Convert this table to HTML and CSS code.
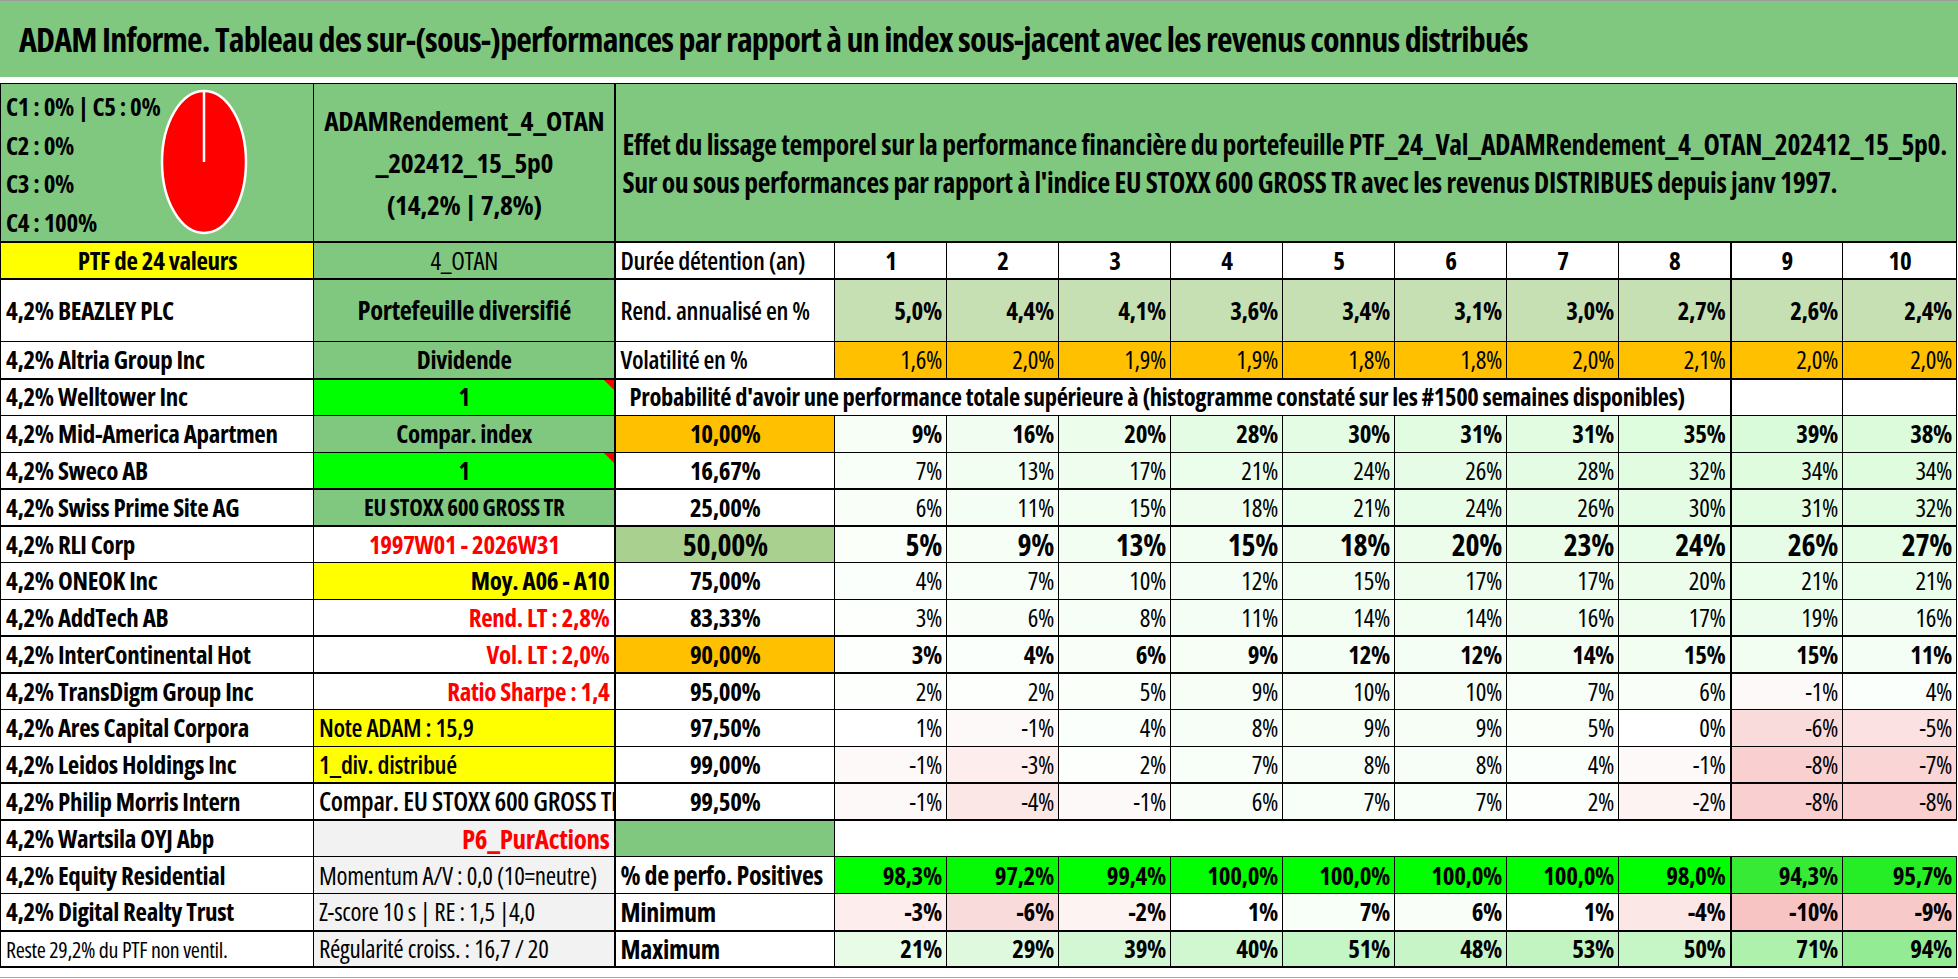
FILE: index.html
```html
<!DOCTYPE html>
<html lang="fr">
<head>
<meta charset="utf-8">
<title>ADAM Informe</title>
<link rel="stylesheet" href="styles.css">
</head>
<body>
<header class="title">ADAM Informe. Tableau des sur-(sous-)performances par rapport à un index sous-jacent avec les revenus connus distribués</header>
<div class="strip"></div>
<table class="sheet">
<colgroup>
<col class="ca"><col class="cb"><col class="cc">
<col class="cn"><col class="cn"><col class="cn"><col class="cn"><col class="cn"><col class="cn"><col class="cn"><col class="cn"><col class="cn"><col class="cl">
</colgroup>
<tbody>
<tr class="r0 tk">
<td class="g top"><div class="cbox"><div class="clines"><div>C1 : 0% | C5 : 0%</div><div>C2 : 0%</div><div>C3 : 0%</div><div>C4 : 100%</div></div>
<svg class="pie" width="88" height="146" viewBox="0 0 88 146"><ellipse cx="44" cy="73" rx="42" ry="71" fill="#ff0000" stroke="#ffffff" stroke-width="2.5"/><line x1="44" y1="2" x2="44" y2="73" stroke="#ffffff" stroke-width="2.5"/></svg></div></td>
<td class="g c hd"><div>ADAMRendement_4_OTAN</div><div>_202412_15_5p0</div><div>(14,2% | 7,8%)</div></td>
<td class="g eff vl" colspan="11"><div>Effet du lissage temporel sur la performance financière du portefeuille PTF_24_Val_ADAMRendement_4_OTAN_202412_15_5p0.</div><div>Sur ou sous performances par rapport à l'indice EU STOXX 600 GROSS TR avec les revenus DISTRIBUES depuis janv 1997.</div></td>
</tr>
<tr class="rs tk">
<td class="y c">PTF de 24 valeurs</td>
<td class="g c otan">4_OTAN</td>
<td class="vl m">Durée détention (an)</td>
<td class="c">1</td><td class="c">2</td><td class="c">3</td><td class="c">4</td><td class="c">5</td><td class="c">6</td><td class="c">7</td><td class="c">8</td><td class="c vl">9</td><td class="c">10</td>
</tr>
<tr class="r2">
<td>4,2% BEAZLEY PLC</td>
<td class="g c pdiv">Portefeuille diversifié</td>
<td class="vl m">Rend. annualisé en %</td>
<td class="rb r">5,0%</td><td class="rb r">4,4%</td><td class="rb r">4,1%</td><td class="rb r">3,6%</td><td class="rb r">3,4%</td><td class="rb r">3,1%</td><td class="rb r">3,0%</td><td class="rb r">2,7%</td><td class="rb r vl">2,6%</td><td class="rb r">2,4%</td>
</tr>
<tr class="rs tk">
<td>4,2% Altria Group Inc</td>
<td class="g c">Dividende</td>
<td class="vl m">Volatilité en %</td>
<td class="o r n">1,6%</td><td class="o r n">2,0%</td><td class="o r n">1,9%</td><td class="o r n">1,9%</td><td class="o r n">1,8%</td><td class="o r n">1,8%</td><td class="o r n">2,0%</td><td class="o r n">2,1%</td><td class="o r n vl">2,0%</td><td class="o r n">2,0%</td>
</tr>
<tr class="rs">
<td>4,2% Welltower Inc</td>
<td class="lg c cm">1</td>
<td class="vl prob" colspan="9">Probabilité d'avoir une performance totale supérieure à (histogramme constaté sur les #1500 semaines disponibles)</td>
<td class="vl"></td><td></td>
</tr>
<tr class="rs">
<td>4,2% Mid-America Apartmen</td>
<td class="g c">Compar. index</td>
<td class="o c vl">10,00%</td>
<td class="p r">9%</td><td class="p r">16%</td><td class="p r">20%</td><td class="p r">28%</td><td class="p r">30%</td><td class="p r">31%</td><td class="p r">31%</td><td class="p r">35%</td><td class="p r vl">39%</td><td class="p r">38%</td>
</tr>
<tr class="rs tk">
<td>4,2% Sweco AB</td>
<td class="lg c cm">1</td>
<td class="c vl">16,67%</td>
<td class="p r n">7%</td><td class="p r n">13%</td><td class="p r n">17%</td><td class="p r n">21%</td><td class="p r n">24%</td><td class="p r n">26%</td><td class="p r n">28%</td><td class="p r n">32%</td><td class="p r n vl">34%</td><td class="p r n">34%</td>
</tr>
<tr class="rs tk">
<td>4,2% Swiss Prime Site AG</td>
<td class="g c sm">EU STOXX 600 GROSS TR</td>
<td class="c vl">25,00%</td>
<td class="p r n">6%</td><td class="p r n">11%</td><td class="p r n">15%</td><td class="p r n">18%</td><td class="p r n">21%</td><td class="p r n">24%</td><td class="p r n">26%</td><td class="p r n">30%</td><td class="p r n vl">31%</td><td class="p r n">32%</td>
</tr>
<tr class="rs">
<td>4,2% RLI Corp</td>
<td class="c red">1997W01 - 2026W31</td>
<td class="pg c big vl">50,00%</td>
<td class="p r big">5%</td><td class="p r big">9%</td><td class="p r big">13%</td><td class="p r big">15%</td><td class="p r big">18%</td><td class="p r big">20%</td><td class="p r big">23%</td><td class="p r big">24%</td><td class="p r big vl">26%</td><td class="p r big">27%</td>
</tr>
<tr class="rs">
<td>4,2% ONEOK Inc</td>
<td class="y r">Moy. A06 - A10</td>
<td class="c vl">75,00%</td>
<td class="p r n">4%</td><td class="p r n">7%</td><td class="p r n">10%</td><td class="p r n">12%</td><td class="p r n">15%</td><td class="p r n">17%</td><td class="p r n">17%</td><td class="p r n">20%</td><td class="p r n vl">21%</td><td class="p r n">21%</td>
</tr>
<tr class="rs tk">
<td>4,2% AddTech AB</td>
<td class="r red">Rend. LT : 2,8%</td>
<td class="c vl">83,33%</td>
<td class="p r n">3%</td><td class="p r n">6%</td><td class="p r n">8%</td><td class="p r n">11%</td><td class="p r n">14%</td><td class="p r n">14%</td><td class="p r n">16%</td><td class="p r n">17%</td><td class="p r n vl">19%</td><td class="p r n">16%</td>
</tr>
<tr class="rs tk">
<td>4,2% InterContinental Hot</td>
<td class="r red">Vol. LT : 2,0%</td>
<td class="o c vl">90,00%</td>
<td class="p r">3%</td><td class="p r">4%</td><td class="p r">6%</td><td class="p r">9%</td><td class="p r">12%</td><td class="p r">12%</td><td class="p r">14%</td><td class="p r">15%</td><td class="p r vl">15%</td><td class="p r">11%</td>
</tr>
<tr class="rs">
<td>4,2% TransDigm Group Inc</td>
<td class="r red">Ratio Sharpe : 1,4</td>
<td class="c vl">95,00%</td>
<td class="p r n">2%</td><td class="p r n">2%</td><td class="p r n">5%</td><td class="p r n">9%</td><td class="p r n">10%</td><td class="p r n">10%</td><td class="p r n">7%</td><td class="p r n">6%</td><td class="p r n vl">-1%</td><td class="p r n">4%</td>
</tr>
<tr class="rs">
<td>4,2% Ares Capital Corpora</td>
<td class="y m">Note ADAM : 15,9</td>
<td class="c vl">97,50%</td>
<td class="p r n">1%</td><td class="p r n">-1%</td><td class="p r n">4%</td><td class="p r n">8%</td><td class="p r n">9%</td><td class="p r n">9%</td><td class="p r n">5%</td><td class="p r n">0%</td><td class="p r n vl">-6%</td><td class="p r n">-5%</td>
</tr>
<tr class="rs tk">
<td>4,2% Leidos Holdings Inc</td>
<td class="y m">1_div. distribué</td>
<td class="c vl">99,00%</td>
<td class="p r n">-1%</td><td class="p r n">-3%</td><td class="p r n">2%</td><td class="p r n">7%</td><td class="p r n">8%</td><td class="p r n">8%</td><td class="p r n">4%</td><td class="p r n">-1%</td><td class="p r n vl">-8%</td><td class="p r n">-7%</td>
</tr>
<tr class="rs tk">
<td>4,2% Philip Morris Intern</td>
<td class="m clip">Compar. EU STOXX 600 GROSS TR</td>
<td class="c vl">99,50%</td>
<td class="p r n">-1%</td><td class="p r n">-4%</td><td class="p r n">-1%</td><td class="p r n">6%</td><td class="p r n">7%</td><td class="p r n">7%</td><td class="p r n">2%</td><td class="p r n">-2%</td><td class="p r n vl">-8%</td><td class="p r n">-8%</td>
</tr>
<tr class="rs">
<td>4,2% Wartsila OYJ Abp</td>
<td class="gray r red pur">P6_PurActions</td>
<td class="g vl"></td>
<td class="blank" colspan="10"></td>
</tr>
<tr class="rs">
<td>4,2% Equity Residential</td>
<td class="gray n2">Momentum A/V : 0,0 (10=neutre)</td>
<td class="vl lab">% de perfo. Positives</td>
<td class="lg r">98,3%</td><td class="lg2 r">97,2%</td><td class="lg r">99,4%</td><td class="lg r">100,0%</td><td class="lg r">100,0%</td><td class="lg r">100,0%</td><td class="lg r">100,0%</td><td class="lg r">98,0%</td><td class="lg4 r vl">94,3%</td><td class="lg3 r">95,7%</td>
</tr>
<tr class="rs tk">
<td>4,2% Digital Realty Trust</td>
<td class="gray n2">Z-score 10 s | RE : 1,5 |4,0</td>
<td class="vl lab">Minimum</td>
<td class="p r">-3%</td><td class="p r">-6%</td><td class="p r">-2%</td><td class="p r">1%</td><td class="p r">7%</td><td class="p r">6%</td><td class="p r">1%</td><td class="p r">-4%</td><td class="p r vl">-10%</td><td class="p r">-9%</td>
</tr>
<tr class="rs tk">
<td class="reste">Reste 29,2% du PTF non ventil.</td>
<td class="gray n2">Régularité croiss. : 16,7 / 20</td>
<td class="vl lab">Maximum</td>
<td class="mx r">21%</td><td class="mx r">29%</td><td class="mx r">39%</td><td class="mx r">40%</td><td class="mx r">51%</td><td class="mx r">48%</td><td class="mx r">53%</td><td class="mx r">50%</td><td class="mx r vl">71%</td><td class="mx r">94%</td>
</tr>
</tbody>
</table>
<div class="foot"></div>
<script src="script.js"></script>
</body>
</html>
```
FILE: styles.css
```css
html, body {
  margin: 0;
  padding: 0;
  background: #ffffff;
}
body {
  width: 1958px;
  height: 979px;
  overflow: hidden;
  font-family: "Open Sans", "Liberation Sans", sans-serif;
  font-stretch: 75%;
  letter-spacing: -0.02em;
  color: #000000;
}
.title {
  box-sizing: border-box;
  height: 77px;
  border-top: 1px solid #9c9c9c;
  background: #80c880;
  display: flex;
  align-items: center;
  padding-left: 19px;
  font-size: 34px;
  font-weight: 700;
  letter-spacing: -0.024em;
  white-space: nowrap;
}
.strip {
  height: 6px;
}
.sheet {
  border-collapse: collapse;
  table-layout: fixed;
  width: 1956px;
}
.ca { width: 313px; }
.cb { width: 301px; }
.cc { width: 220px; }
.cn { width: 112px; }
.cl { width: 114px; }

.sheet td {
  border: 1px solid #000000;
  padding: 0 4px 0 5px;
  font-size: 25px;
  font-weight: 700;
  white-space: nowrap;
  line-height: 1.1;
  vertical-align: middle;
}
.r0 { height: 156px; }
.r2 { height: 63px; }
.rs { height: 36.8px; }
.tk > td { border-bottom: 2px solid #000000; }
.sheet td.vl { border-left: 2px solid #000000; }

.sheet td.top { vertical-align: top; }
.cbox {
  display: flex;
  align-items: flex-start;
}
.clines {
  flex: 0 0 147px;
  padding-top: 3px;
  line-height: 38.5px;
  font-size: 25px;
}
.pie {
  display: block;
  flex: 0 0 auto;
  margin-top: 5px;
}
.sheet td.hd {
  font-size: 27.5px;
  line-height: 42px;
}
.sheet td.eff {
  font-size: 27.6px;
  line-height: 38px;
  padding-left: 7px;
}
.sheet td.prob {
  font-size: 24.5px;
  padding-left: 14px;
  background: #ffffff;
}

.c { text-align: center; }
.r { text-align: right; }
.sheet td.n { font-weight: 400; }
.sheet td.m { font-weight: 600; }
.sheet td.lab { font-weight: 700; font-size: 26px; }
.sheet td.n2 { font-weight: 500; font-size: 25px; letter-spacing: -0.012em; }
.sheet td.otan { font-weight: 500; font-size: 25px; }
.sheet td.pdiv { font-size: 26.5px; }
.sheet td.sm { font-size: 23px; }
.sheet td.big { font-size: 30px; }
.sheet td.pur { font-size: 27px; }
.sheet td.reste { font-weight: 500; font-size: 22px; }
.sheet td.clip {
  overflow: hidden;
  text-overflow: clip;
  font-size: 26.3px;
}
.red { color: #ff0000; }

.g { background: #80c880; }
.y { background: #ffff00; }
.lg { background: #00ff00; }
.lg2 { background: #06fa06; }
.lg3 { background: #26ee26; }
.lg4 { background: #36ea36; }
.o { background: #ffc000; }
.rb { background: #c6e0b4; }
.pg { background: #a9d08e; }
.gray { background: #f2f2f2; }

.sheet td.blank {
  border-left: none;
  border-right: none;
  border-bottom: none;
}
.cm { position: relative; }
.cm::after {
  content: "";
  position: absolute;
  top: 0;
  right: 0;
  border-top: 10px solid #ff0000;
  border-left: 10px solid transparent;
}
.foot {
  height: 9px;
  border-bottom: 1px solid #a6a6a6;
}
```
FILE: script.js
```js
(function () {
  function num(td) {
    return parseFloat(td.textContent.replace('%', '').replace(',', '.'));
  }
  document.querySelectorAll('td.p').forEach(function (td) {
    var v = num(td), r, g, b;
    if (v >= 0) {
      var t = Math.min(v / 40, 1);
      r = 255 - 38 * t; g = 255 - 4 * t; b = 255 - 38 * t;
    } else {
      var u = Math.min(-v / 10, 1);
      r = 255 - 8 * u; g = 255 - 60 * u; b = 255 - 60 * u;
    }
    td.style.backgroundColor = 'rgb(' + Math.round(r) + ',' + Math.round(g) + ',' + Math.round(b) + ')';
  });
  document.querySelectorAll('td.mx').forEach(function (td) {
    var t = Math.min(num(td) / 100, 1);
    td.style.backgroundColor = 'rgb(' + Math.round(255 - 115 * t) + ',' + Math.round(255 - 20 * t) + ',' + Math.round(255 - 115 * t) + ')';
  });
})();
```
